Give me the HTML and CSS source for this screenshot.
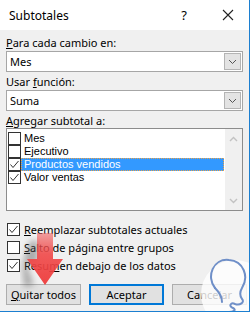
FILE: index.html
```html
<!DOCTYPE html>
<html lang="es">
<head>
  <meta charset="UTF-8">
  <title>Subtotales</title>
  <link rel="stylesheet" href="styles.css">
</head>
<body>

  <div class="dialog">

    <!-- Title bar -->
    <div class="titlebar">
      <span class="title">Subtotales</span>
      <span class="help">?</span>
      <span class="close">
        <svg width="12" height="12" viewBox="0 0 12 12"><path d="M1 1 L11 11 M11 1 L1 11" stroke="#222" stroke-width="1.1" fill="none"/></svg>
      </span>
    </div>

    <div class="content">
      <div class="field-label"><u>P</u>ara cada cambio en:</div>
      <div class="combo">
        <span class="combo-value">Mes</span>
        <span class="combo-btn"><svg width="9" height="6" viewBox="0 0 9 6"><path d="M1 1 L4.5 4.5 L8 1" stroke="#555" fill="none"/></svg></span>
      </div>

      <div class="field-label">Usar <u>f</u>unción:</div>
      <div class="combo">
        <span class="combo-value">Suma</span>
        <span class="combo-btn"><svg width="9" height="6" viewBox="0 0 9 6"><path d="M1 1 L4.5 4.5 L8 1" stroke="#555" fill="none"/></svg></span>
      </div>

      <div class="field-label"><u>A</u>gregar subtotal a:</div>
      <div class="listbox">
        <div class="list-items">
          <div class="list-item"><span class="check"></span><span class="item-text">Mes</span></div>
          <div class="list-item"><span class="check"></span><span class="item-text">Ejecutivo</span></div>
          <div class="list-item selected"><span class="check"><svg width="13" height="13" viewBox="0 0 13 13"><path d="M2.5 6.5 L5 9.5 L10.5 3" stroke="#333" fill="none"/></svg></span><span class="item-text">Productos vendidos</span></div>
          <div class="list-item"><span class="check"><svg width="13" height="13" viewBox="0 0 13 13"><path d="M2.5 6.5 L5 9.5 L10.5 3" stroke="#333" fill="none"/></svg></span><span class="item-text">Valor ventas</span></div>
        </div>
        <div class="scrollbar">
          <svg width="9" height="6" viewBox="0 0 9 6"><path d="M1 5 L4.5 1.5 L8 5" stroke="#c2c2c2" stroke-width="1.4" fill="none"/></svg>
          <svg width="9" height="6" viewBox="0 0 9 6"><path d="M1 1 L4.5 4.5 L8 1" stroke="#c2c2c2" stroke-width="1.4" fill="none"/></svg>
        </div>
      </div>

      <!-- Options -->
      <div class="options">
        <div class="option"><span class="check"><svg width="13" height="13" viewBox="0 0 13 13"><path d="M2.5 6.5 L5 9.5 L10.5 3" stroke="#333" fill="none"/></svg></span><span><u>R</u>eemplazar subtotales actuales</span></div>
        <div class="option"><span class="check"></span><span><u>S</u>alto de página entre grupos</span></div>
        <div class="option"><span class="check"><svg width="13" height="13" viewBox="0 0 13 13"><path d="M2.5 6.5 L5 9.5 L10.5 3" stroke="#333" fill="none"/></svg></span><span>Resu<u>m</u>en debajo de los datos</span></div>
      </div>

      <!-- Buttons -->
      <div class="buttons">
        <div class="btn"><u>Q</u>uitar todos</div>
        <div class="btn default">Aceptar</div>
        <div class="btn">Cancelar</div>
      </div>
    </div>

    <!-- Red arrow annotation -->
    <svg class="arrow" width="60" height="70" viewBox="0 0 60 70">
      <defs>
        <filter id="blur"><feGaussianBlur stdDeviation="3"/></filter>
        <linearGradient id="red" x1="0" y1="0" x2="0" y2="1">
          <stop offset="0" stop-color="#f05a5a" stop-opacity="0.55"/>
          <stop offset="0.4" stop-color="#f04848" stop-opacity="0.9"/>
          <stop offset="1" stop-color="#ee3c3c" stop-opacity="0.95"/>
        </linearGradient>
      </defs>
      <path d="M10 16 L18 16 L18 38 L6 38 L14 60 L4 62 L2 40 Z" fill="#555" opacity="0.45" filter="url(#blur)"/>
      <path d="M17 8 L33 8 L33 34 L43 34 L25 60 L7 34 L17 34 Z" fill="url(#red)"/>
    </svg>

    <!-- Watermark -->
    <svg class="watermark" width="60" height="62" viewBox="0 0 60 62">
      <circle cx="40" cy="44" r="34" fill="#ffffff" opacity="0.8"/>
      <path d="M20 38 C11 27 18 8 34 10 C49 11 54 27 47 38 C44 43 45 46 47 49 C50 52 45 56 40 54 C36 52 33 56 38 58 C42 60 38 62 34 62"
            stroke="#6f8fc8" stroke-width="2" fill="none" stroke-linecap="round"/>
      <path d="M20 38 C24 42 27 46 27 52" stroke="#6f8fc8" stroke-width="2" fill="none" stroke-linecap="round"/>
    </svg>

  </div>

</body>
</html>
```

FILE: styles.css
```css
/* Page */
body {
  margin: 0;
  background: #ffffff;
  font-family: 'Noto Sans', 'Open Sans', sans-serif;
  font-size: 11px;
  color: #000;
}

/* Dialog frame */
.dialog {
  position: relative;
  width: 249px;
  height: 311px;
  border-right: 1px solid #1c7fd0;
  border-bottom: 1px solid #1c7fd0;
  background: #f0f0f0;
  overflow: hidden;
}

/* Title bar */
.titlebar {
  height: 30px;
  background: #ffffff;
  display: flex;
  align-items: center;
}

.title {
  flex: 1;
  padding-left: 9px;
  font-size: 12px;
}

.help {
  width: 14px;
  text-align: center;
  font-size: 13px;
  margin-right: 31px;
}

.close {
  display: flex;
  margin-right: 15px;
}

/* Content */
.content {
  padding: 0 6px;
}

.field-label {
  height: 14px;
  line-height: 14px;
  margin-top: 6px;
  white-space: nowrap;
}

.field-label + .combo {
  margin-top: 1px;
}

.combo {
  height: 19px;
  background: #ffffff;
  border: 1px solid #a6a6a6;
  display: flex;
  align-items: stretch;
}

.combo-value {
  flex: 1;
  padding-left: 3px;
  line-height: 19px;
}

.combo-btn {
  width: 15px;
  margin: 1px;
  background: #e3e3e3;
  border: 1px solid #b4b4b4;
  display: flex;
  align-items: center;
  justify-content: center;
}

.combo + .field-label {
  margin-top: 3px;
}

/* List box */
.listbox {
  height: 81px;
  background: #ffffff;
  border: 1px solid #8c8c8c;
  display: flex;
}

.list-items {
  flex: 1;
  padding-top: 3px;
  padding-left: 1px;
}

.list-item {
  height: 13px;
  display: flex;
  align-items: center;
  white-space: nowrap;
}

.list-item .item-text {
  flex: 1;
  padding-left: 3px;
  line-height: 13px;
  margin-right: 1px;
  font-family: 'Liberation Sans', Arial, sans-serif;
}

.list-item.selected .item-text {
  background: #3399ff;
  color: #ffffff;
  outline: 1px dotted #e9a24a;
  outline-offset: -1px;
}

.check {
  width: 11px;
  height: 11px;
  border: 1px solid #333;
  background: #ffffff;
  flex: none;
  position: relative;
}

.check svg {
  position: absolute;
  left: -1px;
  top: -1px;
}

.scrollbar {
  width: 17px;
  background: #f0f0f0;
  display: flex;
  flex-direction: column;
  justify-content: space-between;
  align-items: center;
  padding: 7px 0 6px;
}

/* Options */
.options {
  margin-top: 9px;
}

.option {
  height: 18px;
  display: flex;
  align-items: center;
  gap: 4px;
  padding-left: 1px;
  white-space: nowrap;
}

/* Buttons */
.buttons {
  display: flex;
  gap: 8px;
  margin-top: 10px;
}

.btn {
  flex: none;
  width: 73px;
  height: 19px;
  line-height: 19px;
  text-align: center;
  background: #e1e1e1;
  border: 1px solid #adadad;
}

.btn.default {
  width: 71px;
  height: 17px;
  line-height: 17px;
  border: 2px solid #0078d7;
}

/* Annotations over the dialog */
.arrow {
  position: absolute;
  left: 20px;
  top: 225px;
}

.watermark {
  position: absolute;
  left: 195px;
  top: 250px;
}
```
